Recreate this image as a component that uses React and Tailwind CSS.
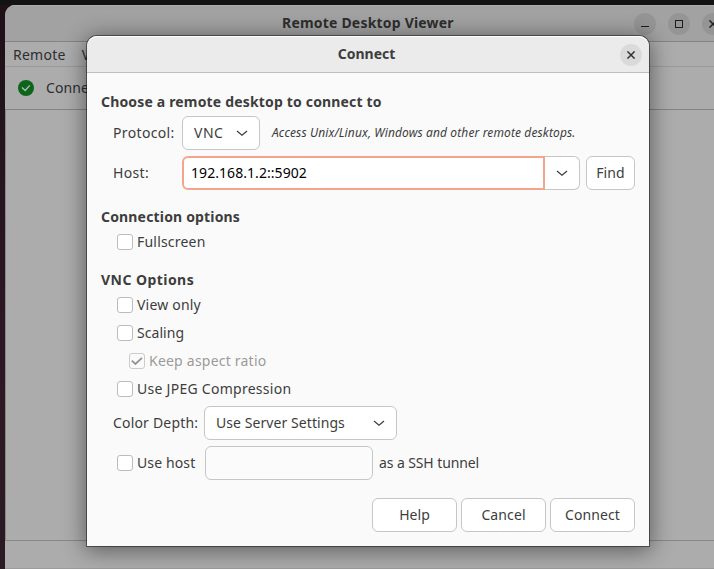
import React from "react";

function Chevron() {
  return (
    <svg className="block shrink-0" width="12" height="8" viewBox="0 0 12 8" fill="none" stroke="#3d3d3d" strokeWidth="1.2">
      <path d="M1 2 L6 6.3 L11 2" />
    </svg>
  );
}

function Label({ className = "", children }) {
  return <span className={`block whitespace-nowrap ${className}`}>{children}</span>;
}

function Checkbox({ checked = false }) {
  return (
    <span className={`mr-1 block size-4 shrink-0 rounded-[3px] border ${checked ? "border-[#cbcbcb] bg-[#fafafa]" : "border-[#bcbcbc] bg-white"}`}>
      {checked && (
        <svg className="block" width="14" height="14" viewBox="0 0 14 14" fill="none" stroke="#929292" strokeWidth="1.8">
          <path d="M1.8 6.7 L5.4 10 L12 3.8" />
        </svg>
      )}
    </span>
  );
}

const box = "flex h-[34px] items-center rounded-md border border-[#c6c6c6] bg-white";

function Heading({ className, children }) {
  return <h2 className={`h-5 whitespace-nowrap font-bold leading-5 ${className}`}>{children}</h2>;
}

function CheckRow({ className = "", text, textClass, checked }) {
  return (
    <div className={`flex items-center ${className}`}>
      <Checkbox checked={checked} />
      <Label className={textClass}>{text}</Label>
    </div>
  );
}

function Dialog() {
  return (
    <section className="absolute left-[87px] top-[36px] flex h-[510px] w-[562px] flex-col rounded-t-[10px] bg-[#fafafa] text-[#3d3d3d] shadow-[0_0_0_1px_rgba(0,0,0,0.45),0_3px_22px_2px_rgba(0,0,0,0.46)]">
      <header className="grid h-[37px] shrink-0 grid-cols-[1fr_auto_1fr] items-center rounded-t-[10px] border-b border-t border-b-[#bdbdbd] border-t-white bg-[#ebebeb] pl-1 pr-[7px]">
        <span />
        <h1 className="pb-0.5 font-bold">Connect</h1>
        <span className="flex size-[22px] items-center justify-center justify-self-end rounded-full bg-[#dadada]">
          <svg width="8" height="8" viewBox="0 0 8 8" stroke="#333" strokeWidth="1.5">
            <path d="M0.4 0.4 L7.6 7.6 M7.6 0.4 L0.4 7.6" />
          </svg>
        </span>
      </header>
      <div className="flex flex-col px-[14px] pt-[19px]">
        <Heading className="tracking-[0.17px]">Choose a remote desktop to connect to</Heading>
        <div className="mt-1 flex h-[34px] items-center pl-3">
          <Label className="w-[69px] tracking-[0.35px]">Protocol:</Label>
          <div className={`${box} w-[78px] justify-between px-[11px]`}>
            <Label className="tracking-[0.5px]">VNC</Label>
            <Chevron />
          </div>
          <Label className="ml-3 text-[12px] italic tracking-[0.12px]">Access Unix/Linux, Windows and other remote desktops.</Label>
        </div>
        <div className="mt-1.5 flex h-[34px] items-center pl-3">
          <Label className="w-[69px] tracking-[0.35px]">Host:</Label>
          <div className="flex h-[34px] w-[363px] items-center rounded-l-md border-2 border-[#f4a68c] bg-white pl-[7px] text-black">
            <Label className="tracking-[0.06px]">192.168.1.2::5902</Label>
          </div>
          <div className="flex h-[34px] w-[35px] items-center justify-center rounded-r-md border border-l-0 border-[#c6c6c6] bg-white">
            <Chevron />
          </div>
          <div className={`${box} ml-1.5 w-[49px] justify-center`}>
            <Label className="tracking-[0.15px]">Find</Label>
          </div>
        </div>
        <Heading className="mt-[17px] tracking-[0.17px]">Connection options</Heading>
        <CheckRow className="mt-[5px] h-5 pl-4" text="Fullscreen" textClass="tracking-[0.2px]" />
        <Heading className="mt-[18px] tracking-[0.45px]">VNC Options</Heading>
        <CheckRow className="mt-px h-7 pl-4" text="View only" textClass="tracking-[0.2px]" />
        <CheckRow className="h-7 pl-4" text="Scaling" textClass="tracking-[0.05px]" />
        <CheckRow className="h-7 pl-7 text-[#9a9a9a]" text="Keep aspect ratio" textClass="tracking-[0.22px]" checked />
        <CheckRow className="h-7 pl-4" text="Use JPEG Compression" textClass="tracking-[0.27px]" />
        <div className="mt-[3px] flex h-[34px] items-center pl-3">
          <Label className="w-[91px] tracking-[0.18px]">Color Depth:</Label>
          <div className={`${box} w-[193px] justify-between px-[11px]`}>
            <Label className="tracking-[0.07px]">Use Server Settings</Label>
            <Chevron />
          </div>
        </div>
        <div className="mt-1.5 flex h-[34px] items-center pl-4">
          <Checkbox />
          <Label className="w-[68px] tracking-[0.12px]">Use host</Label>
          <div className="h-[34px] w-[168px] rounded-md border border-[#c6c6c6] bg-[#fbfbfb]" />
          <Label className="ml-1.5 tracking-[-0.1px]">as a SSH tunnel</Label>
        </div>
        <div className="mt-[18px] flex justify-end gap-1">
          <div className={`${box} w-[85px] justify-center`}><Label>Help</Label></div>
          <div className={`${box} w-[85px] justify-center`}><Label className="tracking-[0.1px]">Cancel</Label></div>
          <div className={`${box} w-[85px] justify-center`}><Label className="tracking-[0.1px]">Connect</Label></div>
        </div>
      </div>
    </section>
  );
}

export default function App() {
  return (
    <div className="relative h-[569px] w-[714px] overflow-hidden bg-[linear-gradient(#1e1118,#2f1826_70%,#291a24)] font-['Noto_Sans','Open_Sans',sans-serif] text-[14px] leading-5 text-[#2e2e2e]">
      <div className="h-[5px] bg-[#131313]" />
      <main className="ml-[5px] flex h-[564px] w-[709px] flex-col overflow-hidden rounded-tl-[10px] bg-[#acacac]">
        <header className="flex h-[37px] shrink-0 items-center border-b border-t border-b-[#838383] border-t-[#adadad] bg-[#a2a2a2]">
          <h1 className="ml-[277px] w-[352px] shrink-0 whitespace-nowrap pb-0.5 font-bold tracking-[0.2px]">Remote Desktop Viewer</h1>
          <span className="mr-3 flex size-[22px] shrink-0 items-center justify-center rounded-full bg-[#959595]">
            <span className="mt-[5px] h-px w-2 bg-[#1d1d1d]" />
          </span>
          <span className="mr-3 flex size-[22px] shrink-0 items-center justify-center rounded-full bg-[#959595]">
            <span className="size-2 border border-[#1d1d1d]" />
          </span>
          <span className="flex size-[22px] shrink-0 items-center justify-center rounded-full bg-[#959595]">
            <svg width="8" height="8" viewBox="0 0 8 8" stroke="#222" strokeWidth="1.5">
              <path d="M0.4 0.4 L7.6 7.6 M7.6 0.4 L0.4 7.6" />
            </svg>
          </span>
        </header>
        <nav className="flex h-[25px] shrink-0 items-center gap-4 border-b border-[#9a9a9a] pl-2 pt-0.5">
          <Label className="tracking-[0.25px]">Remote</Label>
          <Label>View</Label>
        </nav>
        <div className="flex h-[43px] shrink-0 items-center border-b border-[#838383] pl-[13px]">
          <svg className="mr-3 block" width="16" height="16" viewBox="0 0 16 16">
            <circle cx="8" cy="8" r="8" fill="#0c651b" />
            <path d="M4 7.4 L7.2 10.4 L11.8 5.4" fill="none" stroke="#b5b5b5" strokeWidth="1.4" />
          </svg>
          <Label className="tracking-[0.1px]">Connect</Label>
        </div>
        <div className="flex-1 border-b border-l border-[#878787]" />
        <div className="h-7 shrink-0 border-b border-[#9c9c9c]" />
      </main>
      <Dialog />
    </div>
  );
}
